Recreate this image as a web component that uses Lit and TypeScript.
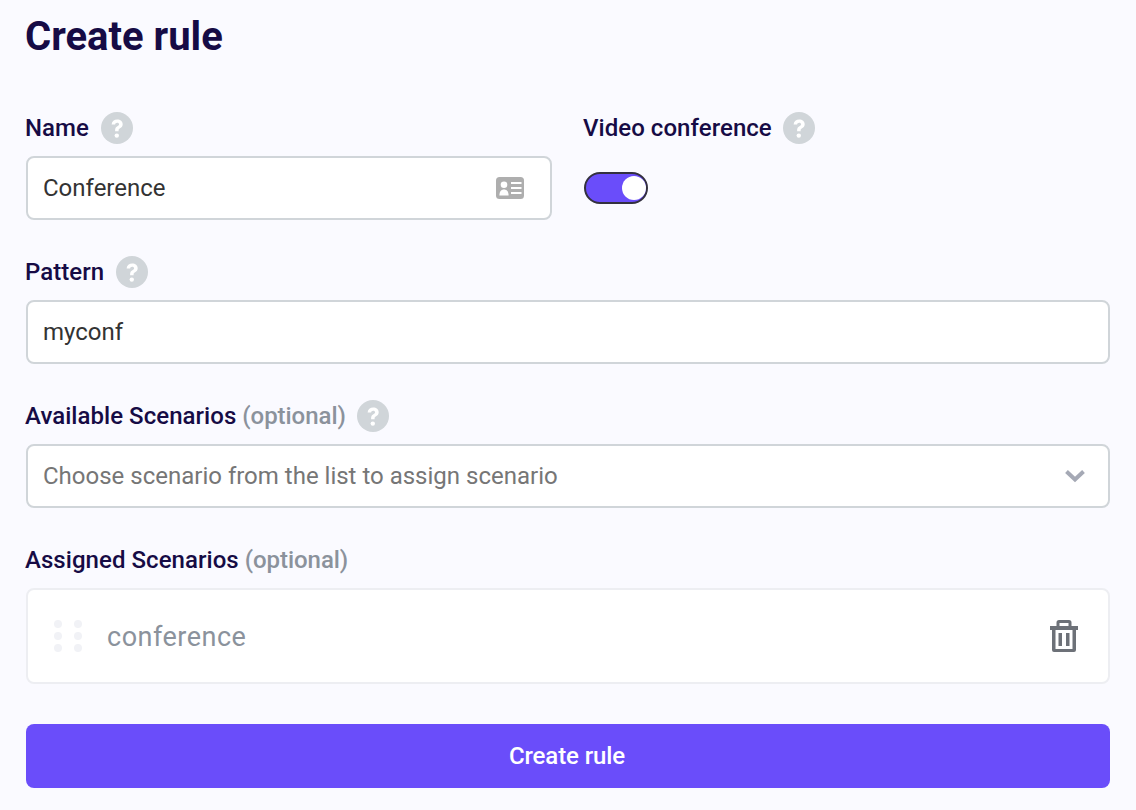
import { LitElement, html, svg, css } from "lit";
import { customElement } from "lit/decorators.js";

const help = html`<svg class="help" viewBox="0 0 32 32" width="32" height="32" aria-hidden="true">
  <circle cx="16" cy="16" r="16" fill="#d0d5d9"></circle>
  <path d="M10.6 12.4c.3-3 2.6-4.9 5.6-4.9 3.2 0 5.5 1.9 5.5 4.7 0 2-1 3.1-2.6 4.1-1.2.8-1.5 1.2-1.5 2.2v.7h-3.5v-1c0-1.9.7-2.9 2.3-3.9 1.2-.8 1.7-1.3 1.7-2.1 0-.9-.8-1.5-1.9-1.5-1.2 0-2 .7-2.1 1.9z" fill="#fff"></path>
  <circle cx="15.8" cy="23.6" r="2.2" fill="#fff"></circle>
</svg>`;

@customElement("app-root")
export class AppRoot extends LitElement {
  static styles = css`
    :host {
      display: block;
      box-sizing: border-box;
      height: 810px;
      padding: 14px 26px 0 26px;
      background: #fafaff;
      font-family: Roboto, "Liberation Sans", sans-serif;
      color: #160b45;
      overflow: hidden;
    }
    h1 {
      margin: 0 0 0 -1px;
      font-size: 40px;
      line-height: 46px;
      font-weight: 700;
      color: #160b45;
    }
    .grid {
      display: grid;
      grid-template-columns: 526px 526px;
      column-gap: 32px;
      margin-top: 52px;
    }
    .field {
      height: 144px;
    }
    .wide {
      grid-column: 1 / -1;
    }
    .label {
      display: flex;
      align-items: center;
      height: 32px;
      margin: 0 0 12px -1px;
      font-size: 24px;
      font-weight: 500;
      line-height: 32px;
      letter-spacing: 0.05px;
      white-space: pre;
    }
    .opt {
      color: #8b929c;
      font-weight: 500;
      letter-spacing: -0.05px;
    }
    .help {
      margin-left: 11.6px;
      flex: none;
    }
    .input {
      box-sizing: border-box;
      height: 64px;
      display: flex;
      align-items: center;
      justify-content: space-between;
      padding: 0 25px 0 15px;
      background: #fff;
      border: 2px solid #d0d5d9;
      border-radius: 8px;
      font-size: 24px;
      color: #333;
    }
    .placeholder {
      color: #767676;
    }
    .select {
      padding-right: 22px;
    }
    .toggle-row {
      height: 64px;
      display: flex;
      align-items: center;
    }
    .toggle {
      box-sizing: border-box;
      width: 64px;
      height: 32px;
      border: 2px solid #33303f;
      border-radius: 16px;
      background: #6a4dfa;
      display: flex;
      justify-content: flex-end;
      align-items: center;
    }
    .knob {
      width: 24px;
      height: 24px;
      border-radius: 50%;
      background: #fff;
    }
    .item {
      box-sizing: border-box;
      height: 96px;
      display: flex;
      align-items: center;
      padding: 0 30px 0 26px;
      background: #fff;
      border: 2px solid #edeef2;
      border-radius: 8px;
    }
    .grip {
      flex: none;
      margin-right: 24px;
    }
    .item-name {
      flex: 1;
      margin-left: -1px;
      padding-top: 2px;
      font-size: 27px;
      color: #8b929c;
      letter-spacing: 0.5px;
    }
    button {
      display: block;
      width: 100%;
      height: 64px;
      margin-top: 40px;
      padding: 0 2px 0 0;
      border: 0;
      border-radius: 8px;
      background: #6a4dfa;
      color: #fff;
      font-family: inherit;
      font-size: 24px;
      font-weight: 500;
      letter-spacing: -0.1px;
    }
    .assigned {
      height: auto;
    }
  `;

  render() {
    return html`
      <h1>Create rule</h1>
      <div class="grid">
        <div class="field">
          <div class="label">Name${help}</div>
          <div class="input">
            <span>Conference</span>
            <svg width="30" height="24" viewBox="0 0 30 24" aria-hidden="true">
              <rect x="1" y="1" width="28" height="22" rx="3.5" fill="#aeaeae"></rect>
              <circle cx="9" cy="8.8" r="3.3" fill="#fff"></circle>
              <path d="M4.4 19.5c0-4 1.8-6 4.6-6s4.6 2 4.6 6z" fill="#fff"></path>
              <path d="M16 6h10.5v2H16zM16 11h10.5v2H16zM16 16h10.5v2H16z" fill="#fff"></path>
            </svg>
          </div>
        </div>
        <div class="field">
          <div class="label">Video conference${help}</div>
          <div class="toggle-row">
            <div class="toggle"><div class="knob"></div></div>
          </div>
        </div>
        <div class="field wide">
          <div class="label">Pattern${help}</div>
          <div class="input"><span>myconf</span></div>
        </div>
        <div class="field wide">
          <div class="label">Available Scenarios <span class="opt">(optional)</span>${help}</div>
          <div class="input select">
            <span class="placeholder">Choose scenario from the list to assign scenario</span>
            <svg width="22" height="14" viewBox="0 0 22 14" aria-hidden="true">
              <path d="M2.5 2.5l8.5 8 8.5-8" fill="none" stroke="#a5a9b5" stroke-width="4"></path>
            </svg>
          </div>
        </div>
        <div class="field wide assigned">
          <div class="label">Assigned Scenarios <span class="opt">(optional)</span></div>
          <div class="item">
            <svg class="grip" width="30" height="32" viewBox="0 0 30 32" aria-hidden="true">
              ${[4, 16, 28].map(
                (y) => svg`<circle cx="4" cy=${y} r="4" fill="#f1f2f6"></circle>
                  <circle cx="24" cy=${y} r="4" fill="#f1f2f6"></circle>`
              )}
            </svg>
            <span class="item-name">conference</span>
            <svg width="28" height="32" viewBox="0 0 28 32" aria-hidden="true">
              <path d="M0 6h28v4H0z" fill="#6d7178"></path>
              <path d="M8 7V2.5a1 1 0 0 1 1-1h10a1 1 0 0 1 1 1V7" fill="none" stroke="#6d7178" stroke-width="3"></path>
              <path d="M2 9h24v21a2 2 0 0 1-2 2H4a2 2 0 0 1-2-2z M5.5 9v20h17V9z" fill="#6d7178" fill-rule="evenodd"></path>
              <path d="M8.5 13h3.5v13H8.5zM16 13h3.5v13H16z" fill="#6d7178"></path>
            </svg>
          </div>
        </div>
      </div>
      <button>Create rule</button>
    `;
  }
}
